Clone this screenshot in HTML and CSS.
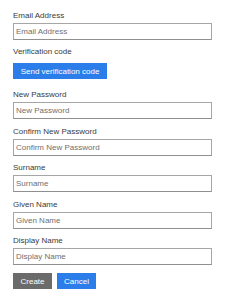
FILE: index.html
```html
<!DOCTYPE html>
<html lang="en">

<head>
  <meta charset="UTF-8" />
  <meta name="viewport" content="width=device-width, initial-scale=1.0" />
  <title>Sign up</title>
  <link rel="stylesheet" href="styles.css">
</head>

<body>
  <div class="form">
    <!-- email -->
    <label class="label" for="email">Email Address</label>
    <input class="field" id="email" type="text" placeholder="Email Address" />

    <label class="label label-code">Verification code</label>
    <button class="btn btn-blue btn-send">Send verification code</button>

    <!-- password -->
    <label class="label" for="pwd">New Password</label>
    <input class="field" id="pwd" type="password" placeholder="New Password" />

    <label class="label" for="pwd2">Confirm New Password</label>
    <input class="field" id="pwd2" type="password" placeholder="Confirm New Password" />

    <!-- name -->
    <label class="label" for="surname">Surname</label>
    <input class="field" id="surname" type="text" placeholder="Surname" />

    <label class="label" for="given">Given Name</label>
    <input class="field" id="given" type="text" placeholder="Given Name" />

    <label class="label" for="display">Display Name</label>
    <input class="field" id="display" type="text" placeholder="Display Name" />

    <div class="actions">
      <button class="btn btn-gray">Create</button>
      <button class="btn btn-blue">Cancel</button>
    </div>
  </div>
</body>

</html>
```

FILE: styles.css
```css
* {
  margin: 0;
  padding: 0;
  box-sizing: border-box;
}

body {
  font-family: "Liberation Sans", Arial, sans-serif;
  font-size: 8px;
  color: #333;
  background: #fff;
}

.form {
  padding: 11px 13px;
  display: flex;
  flex-direction: column;
  align-items: flex-start;
}

.label {
  display: block;
  line-height: 10px;
  margin-bottom: 2px;
  color: #3a3a3a;
}

.label-code {
  margin-bottom: 6px;
}

.field {
  width: 199px;
  height: 17px;
  border: 1px solid #a6a6a6;
  border-bottom-color: #8f8f8f;
  padding: 0 2px;
  font: 8px "Liberation Sans", Arial, sans-serif;
  color: #333;
  outline: none;
  margin-bottom: 7.4px;
}

.field::placeholder {
  color: #6f6f6f;
}

.btn {
  height: 16px;
  border: none;
  color: #fff;
  font: 8px "Liberation Sans", Arial, sans-serif;
  cursor: pointer;
}

.btn-blue {
  background: #2b7de9;
}

.btn-gray {
  background: #6b6b6b;
}

.btn-send {
  width: 94px;
  margin-bottom: 11px;
}

.actions {
  display: flex;
  gap: 5px;
  margin-top: 1px;
}

.actions .btn {
  width: 39px;
}
```
